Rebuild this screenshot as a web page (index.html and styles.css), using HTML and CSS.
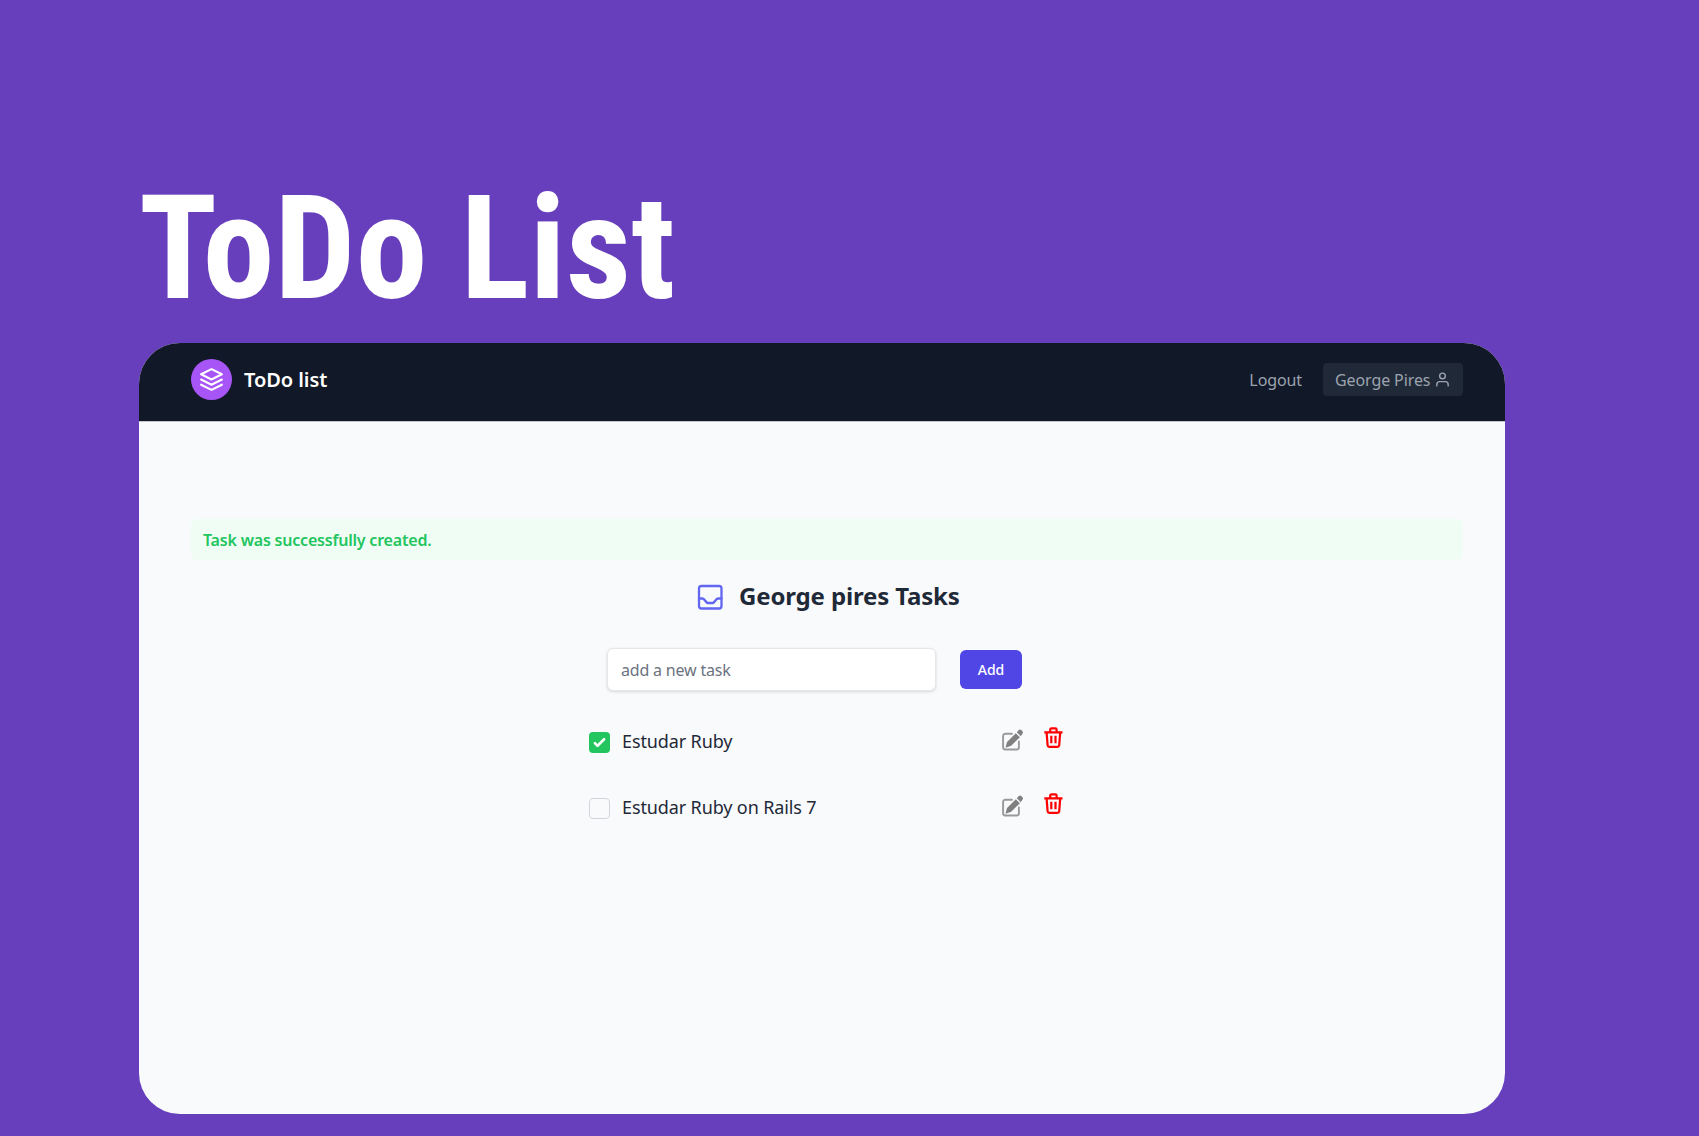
FILE: index.html
```html
<!DOCTYPE html>
<html lang="en">
<head>
<meta charset="utf-8">
<title>ToDo List</title>
<link rel="stylesheet" href="styles.css">
</head>
<body>
<main class="showcase">
  <h1 class="title">ToDo List</h1>
  <section class="window">
    <header class="navbar">
      <div class="brand">
        <span class="logo"><svg viewBox="0 0 24 24"><path d="M12 2 2 7l10 5 10-5-10-5zM2 17l10 5 10-5M2 12l10 5 10-5"/></svg></span>
        <span class="brand-name">ToDo list</span>
      </div>
      <nav class="menu">
        <a class="logout">Logout</a>
        <a class="account"><span>George Pires</span><svg viewBox="0 0 24 24"><path d="M20 21v-2a4 4 0 0 0-4-4H8a4 4 0 0 0-4 4v2"/><circle cx="12" cy="7" r="4"/></svg></a>
      </nav>
    </header>
    <p class="notice">Task was successfully created.</p>
    <h2 class="heading"><svg viewBox="0 0 26 26"><rect x="2" y="2" width="22.500" height="22.500" rx="2.5"/><path d="M2 14.500h3.500c2.500 0 3 4.500 5.500 4.500h4.500c2.500 0 3-4.500 5.500-4.500H24.500"/></svg><span>George pires Tasks</span></h2>
    <form class="new-task">
      <div class="field">add a new task</div>
      <button class="add" type="button">Add</button>
    </form>
    <ul class="tasks">
      <li class="task">
        <i class="check done"><svg viewBox="0 0 16 16"><path d="M12.207 4.793a1 1 0 0 1 0 1.414l-5 5a1 1 0 0 1-1.414 0l-2-2a1 1 0 0 1 1.414-1.414L6.500 9.086l4.293-4.293a1 1 0 0 1 1.414 0z"/></svg></i>
        <span class="name">Estudar Ruby</span>
        <svg class="edit" viewBox="0 0 21 22"><path class="frame" d="M10 4.700H3.300A2.200 2.200 0 0 0 1.100 6.900v11.400a2.200 2.200 0 0 0 2.200 2.200h11.400a2.200 2.200 0 0 0 2.200-2.200V12.500"/><path class="pen" d="M3.500 18.800 5 13 13.800 4.200 17.900 8.200 9.200 16.800zM14.800 3.200 16.800 1.100q1.300-1 2.500 0l1.100 1.200q1.100 1.200 0 2.500L18.800 7.200z"/></svg>
        <svg class="trash" viewBox="0 0 19 21"><path d="M.3 5.300h18.200M2.600 5.300l1 13q.2 1.500 1.700 1.500h8.200q1.500 0 1.700-1.500L16.200 5.300M6.200 5.300V2.600q0-1.200 1.200-1.200h4q1.200 0 1.200 1.200v2.700M7.300 8.700v7.500M11.500 8.700v7.500"/></svg>
      </li>
      <li class="task">
        <i class="check"></i>
        <span class="name">Estudar Ruby on Rails 7</span>
        <svg class="edit" viewBox="0 0 21 22"><path class="frame" d="M10 4.700H3.300A2.200 2.200 0 0 0 1.100 6.900v11.400a2.200 2.200 0 0 0 2.200 2.200h11.400a2.200 2.200 0 0 0 2.200-2.200V12.500"/><path class="pen" d="M3.500 18.800 5 13 13.800 4.200 17.900 8.200 9.200 16.800zM14.800 3.200 16.800 1.100q1.300-1 2.500 0l1.100 1.200q1.100 1.200 0 2.500L18.800 7.200z"/></svg>
        <svg class="trash" viewBox="0 0 19 21"><path d="M.3 5.300h18.200M2.600 5.300l1 13q.2 1.500 1.700 1.500h8.200q1.500 0 1.700-1.500L16.200 5.300M6.200 5.300V2.600q0-1.200 1.200-1.200h4q1.200 0 1.200 1.200v2.700M7.300 8.700v7.500M11.500 8.700v7.500"/></svg>
      </li>
    </ul>
  </section>
</main>
</body>
</html>
```
FILE: styles.css
```css
* { box-sizing: border-box; margin: 0; padding: 0; }
body { background: #673fbd; font-family: "Noto Sans", "Open Sans", sans-serif; color: #1f2937; }
svg { display: block; fill: none; stroke: currentColor; stroke-width: 2; stroke-linecap: round; stroke-linejoin: round; flex: none; }
.showcase { height: 1136px; padding: 164px 194px 0 139px; overflow: hidden; }
.title { height: 179px; font: 700 144px/169px "Roboto Condensed", Roboto, sans-serif; font-stretch: 75%; color: #fff; white-space: nowrap; }
.window { height: 771px; border-radius: 41px; background: #f9fafc; overflow: hidden; }
.navbar { display: flex; justify-content: space-between; align-items: center; height: 79px; padding: 0 42px 5px 52px; background: #111827; border-bottom: 1px solid #c4c6cb; }
.brand, .menu { display: flex; align-items: center; }
.brand { gap: 12px; color: #fff; font-size: 20px; font-weight: 600; letter-spacing: -.05px; }
.logo { display: grid; place-items: center; width: 41px; height: 41px; border-radius: 50%; background: #a855f7; }
.logo svg { width: 25px; height: 25px; }
.menu { gap: 21px; color: #9ca3af; font-size: 16px; letter-spacing: -.1px; }
.account { display: flex; align-items: center; gap: 4px; width: 140px; height: 33px; padding-left: 12px; border-radius: 4px; background: #1f2937; }
.account svg { width: 17px; height: 17px; }
.notice { height: 41px; margin: 97px 42px 0 52px; padding-left: 12px; border-radius: 6px; background: #f0fdf4; color: #22c55e; font-size: 16px; font-weight: 600; line-height: 42px; letter-spacing: -.2px; }
.heading { display: flex; align-items: center; height: 33px; margin: 20px 0 0 558px; gap: 16px; font-size: 24px; font-weight: 700; letter-spacing: -.15px; white-space: nowrap; }
.heading svg { width: 26px; height: 26px; color: #6366f1; stroke-width: 2.300; }
.heading span { padding-bottom: 2px; }
.new-task { display: flex; align-items: center; gap: 24px; height: 43px; margin: 35px 0 0 468px; }
.field { width: 329px; height: 43px; padding-left: 13px; border: 1px solid #e5e7eb; border-radius: 6px; background: #fff; box-shadow: 0 1px 3px rgba(0,0,0,.14); color: #6b7280; font-size: 16px; line-height: 42px; letter-spacing: -.18px; }
.add { width: 62px; height: 39px; border: 0; border-radius: 6px; background: #4f46e5; color: #fff; font: 500 14px "Noto Sans", sans-serif; }
.tasks { list-style: none; margin: 18px 0 0 450px; width: 473.500px; }
.task { display: flex; align-items: center; height: 66px; }
.check { width: 21px; height: 21px; border: 1px solid #d1d5db; border-radius: 4px; }
.check.done { border: 0; background: #22c55e; }
.check svg { width: 21px; height: 21px; fill: #fff; stroke: none; }
.name { margin-left: 12px; margin-right: auto; padding-bottom: 3px; font-size: 18px; letter-spacing: -.12px; }
.edit { width: 21px; height: 22px; margin: 0 21px 5px 0; }
.edit .frame { stroke: #999; stroke-width: 1.900; }
.edit .pen { fill: #808080; stroke: none; }
.trash { width: 19px; height: 21px; margin-bottom: 10px; color: #f00; stroke-width: 2.200; stroke-linecap: butt; }
```
